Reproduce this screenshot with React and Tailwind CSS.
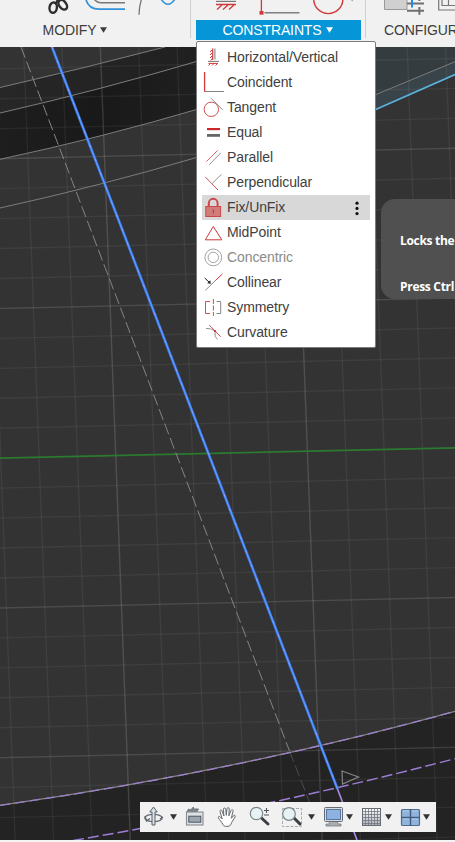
import React from "react";

const RED = "#cf3a3a";
const GRAY = "#858585";

const range = (a, b) => Array.from({ length: b - a + 1 }, (_, i) => a + i);

function Canvas() {
  return (
    <svg width="455" height="793" viewBox="0 47 455 793" className="block" fill="none">
      <defs>
        <linearGradient id="bandUpper" x1="0" y1="0" x2="1" y2="0">
          <stop offset="0" stopColor="#272727" />
          <stop offset="1" stopColor="#202020" />
        </linearGradient>
        <linearGradient id="bandLower" x1="0" y1="0" x2="1" y2="0">
          <stop offset="0" stopColor="#1e1e1e" />
          <stop offset="0.5" stopColor="#191919" />
          <stop offset="1" stopColor="#202020" />
        </linearGradient>
      </defs>
      <rect y="47" width="455" height="793" fill="#333333" />
      <path d="M0 87.5 Q85 68 165 47 H200 V60.5 Q100 90 0 113Z" fill="url(#bandUpper)" />
      <path d="M0 113 Q100 90 200 60.5 V108.5 Q100 138 0 159.3Z" fill="url(#bandLower)" />
      <path d="M370 47 H455 V74.5 L370 112Z" fill="#39444a" />
      <path d="M370 47 H455 V61.7 L370 97Z" fill="#343c3f" />
      <path d="M0 805.3 Q235 772 455 711.3 V840 H0Z" fill="#232323" />

      {range(-4, 12).map((i) => {
        const x = 100.3 + i * 38.36;
        return (
          <line key={i} x1={x} y1="47" x2={x + 30} y2="840" stroke="#fff"
            strokeOpacity={i % 5 === 0 ? 0.14 : 0.06} strokeWidth="1.4" />
        );
      })}
      {range(-13, 13).filter((i) => i !== 0).map((i) => {
        const y = 458.2 + i * 29.95;
        return (
          <line key={i} x1="0" y1={y} x2="455" y2={y - 10.4} stroke="#fff"
            strokeOpacity={i % 5 === 0 ? 0.12 : 0.055} strokeWidth="1.4" />
        );
      })}
      <line x1="0" y1="458.1" x2="455" y2="447.8" stroke="#2c7a2f" strokeWidth="1.7" />

      <g stroke="#7c7c7c" strokeWidth="1">
        <path d="M0 87.5 Q85 68 165 47" />
        <path d="M0 113 Q100 90 200 60.5" />
        <path d="M0 159.3 Q100 138 200 108.5" />
        <path d="M0 208 Q100 186 200 156.5" />
        <path d="M370 97 L455 61.7" />
      </g>
      <path d="M370 112 L455 74.5" stroke="#5bb2df" strokeWidth="1.7" />

      <path d="M21 47 L289.5 751" stroke="#858585" strokeWidth="1" strokeDasharray="11.5 4" />
      <path d="M289.5 751 L311 806" stroke="#4c4c4c" strokeWidth="1" strokeDasharray="11.5 4" />
      <path d="M0 805.3 Q235 772 455 711.3" stroke="#858585" strokeWidth="1.3" />
      <path d="M0 805.3 Q235 772 455 711.3" stroke="#9d80cf" strokeWidth="1.3" strokeDasharray="10 5" />
      <path d="M73 840.5 Q270 807 455 758.7" stroke="#9d7dd6" strokeWidth="1.5" strokeDasharray="11 4" />
      <path d="M337.5 789 L357 840" stroke="#b08bea" strokeWidth="1.6" />
      <path d="M52 47 L337.5 789" stroke="#3473dc" strokeWidth="2.8" />
      <path d="M52 47 L337.5 789" stroke="#6298ff" strokeWidth="1.3" />
      <path d="M52 47 L337.5 789" stroke="#a79be8" strokeWidth="0.9" strokeDasharray="2 13" />
      <path d="M342 771 L358.5 777 L342.5 784Z" stroke="#858585" strokeWidth="1.2" />
    </svg>
  );
}

const ICONS = {
  hv: (
    <>
      <path d="M10.7 3.5V15" stroke={RED} strokeWidth="1.2" />
      <path d="M10 5l-2 2M10 8l-2 2M10 11l-2 2M10 14l-1.5 1.2" stroke={RED} />
      <path d="M12.9 3.5V14.5M6 16.4H17" stroke="#777" />
      <path d="M6.5 18.4H16M8.5 18.5l-2 2M12 18.5l-2 2M15.5 18.5l-2 2" stroke={RED} />
    </>
  ),
  coincident: (
    <>
      <path d="M3 21.5H22" stroke={GRAY} />
      <path d="M2.6 2V21.8" stroke={RED} strokeWidth="1.3" />
    </>
  ),
  tangent: (
    <>
      <circle cx="9.3" cy="14.3" r="7.2" stroke={RED} strokeWidth=".9" />
      <path d="M8.8 3L20.7 14.8" stroke={GRAY} strokeWidth=".9" />
    </>
  ),
  equal: (
    <>
      <rect x="5" y="8" width="13" height="2.2" fill="#cc2828" />
      <rect x="5" y="14" width="13" height="2.8" fill="#666" />
    </>
  ),
  parallel: (
    <>
      <path d="M4.3 16.7L15.7 5.3" stroke="#dd5555" strokeWidth=".9" />
      <path d="M7.3 19.7L18.7 8" stroke={GRAY} strokeWidth=".9" />
    </>
  ),
  perpendicular: (
    <>
      <path d="M3.3 7L16 20" stroke={RED} strokeWidth=".9" />
      <path d="M10.3 13.3L19.5 4.3" stroke={GRAY} strokeWidth=".9" />
    </>
  ),
  fix: (
    <>
      <path d="M6.8 12V8.2a4.4 4.4 0 0 1 8.8 0V12" stroke="#cc4848" strokeWidth="2" />
      <rect x="3.8" y="11.5" width="14.8" height="10" fill="#d27b7b" stroke="#cc4848" />
      <path d="M11.3 14.5v4" stroke="#b03838" />
    </>
  ),
  midpoint: <path d="M11.3 6.5L19.8 19.8H3.3Z" stroke={RED} />,
  concentric: (
    <>
      <circle cx="11.3" cy="12.4" r="8.4" stroke="#999" strokeWidth=".9" />
      <circle cx="11.3" cy="12.4" r="5.2" stroke="#999" strokeWidth=".9" />
    </>
  ),
  collinear: (
    <>
      <path d="M3.3 20.3L14 10" stroke={GRAY} />
      <path d="M14 10L20.3 4" stroke={RED} />
      <path d="M2.7 8L8 13" stroke="#222" />
      <path d="M8.8 13.8L8.3 10.2L5.2 13.2Z" fill="#222" />
    </>
  ),
  symmetry: (
    <>
      <path d="M8 6.5H3.5V18.5H8" stroke={RED} strokeWidth=".9" />
      <path d="M11.4 4V21" stroke={RED} strokeWidth=".9" strokeDasharray="5 1.5" />
      <path d="M14.5 6.5H18.7V18.5H14.5" stroke={GRAY} strokeWidth="1" />
    </>
  ),
  curvature: (
    <>
      <path d="M4 8.5Q11 8.3 13 12Q12.3 17.5 15.5 19.5" stroke={GRAY} strokeWidth=".9" />
      <path d="M7.3 5L18.7 16.8" stroke={RED} strokeWidth=".9" />
      <circle cx="13" cy="11" r="1.1" fill="#d22" />
    </>
  ),
};

const ITEMS = [
  ["hv", "Horizontal/Vertical"],
  ["coincident", "Coincident"],
  ["tangent", "Tangent"],
  ["equal", "Equal"],
  ["parallel", "Parallel"],
  ["perpendicular", "Perpendicular"],
  ["fix", "Fix/UnFix"],
  ["midpoint", "MidPoint"],
  ["concentric", "Concentric"],
  ["collinear", "Collinear"],
  ["symmetry", "Symmetry"],
  ["curvature", "Curvature"],
];

function ConstraintMenu() {
  return (
    <ul className="absolute left-[196px] top-[41px] h-[307px] w-[180px] rounded-xs border border-[#7b7b7b] bg-white px-[5px] py-[3px]">
      {ITEMS.map(([id, label]) => (
        <li key={id} className={`flex h-[25px] items-center ${id === "fix" ? "bg-[#d8d8d8]" : ""}`}>
          <svg width="25" height="25" viewBox="0 0 25 25" fill="none" className="shrink-0">{ICONS[id]}</svg>
          <span className={`text-[14px] leading-[25px] tracking-[-0.1px] ${id === "concentric" ? "text-[#8a8a8a]" : "text-[#404040]"}`}>{label}</span>
          {id === "fix" && (
            <svg width="6" height="18" viewBox="0 0 6 18" className="ml-auto mr-[10px]" fill="#111">
              <circle cx="3" cy="4.2" r="1.6" />
              <circle cx="3" cy="9.4" r="1.6" />
              <circle cx="3" cy="14.6" r="1.6" />
            </svg>
          )}
        </li>
      ))}
    </ul>
  );
}

function Caret({ className }) {
  return (
    <svg width="7" height="6" viewBox="0 0 7 6" className={className}>
      <path d="M0 0.3H7L3.5 5.8Z" fill="currentColor" />
    </svg>
  );
}

function Ribbon() {
  return (
    <header className="flex h-[47px] overflow-hidden bg-[#f1f1f1] text-[14px] text-[#3c3c3c]">
      <section className="flex w-[191px] shrink-0 flex-col">
        <svg width="191" height="20" viewBox="0 0 191 20" fill="none" className="block">
          <g stroke="#2d2d2d" strokeWidth="2.4">
            <ellipse cx="53.2" cy="7.6" rx="3.7" ry="5.2" transform="rotate(8 53.2 7.6)" />
            <ellipse cx="62.8" cy="4.8" rx="3.5" ry="5.4" transform="rotate(-38 62.8 4.8)" />
            <path d="M56 3L60 -2M58 1L55 -3" />
          </g>
          <path d="M85.5 -2Q88 9.2 99 9.2H125" stroke="#3192d8" strokeWidth="1.7" />
          <path d="M94 -1Q97 2.8 101 2.8H125" stroke="#777" strokeWidth="1.4" />
          <path d="M139 14.8Q139 7 141.5 -1" stroke="#777" strokeWidth="1.3" />
          <path d="M161 -1Q168 9.5 175 -1" stroke="#3192d8" strokeWidth="1.5" />
          <path d="M190.5 0V20" stroke="#cfcfcf" />
        </svg>
        <div className="flex h-[18px] items-center border-r border-[#cfcfcf] pl-[42.6px] pt-[2px]">
          <span className="tracking-[-0.1px]">MODIFY</span>
          <Caret className="ml-[4px]" />
        </div>
      </section>
      <section className="flex w-[175px] shrink-0 flex-col">
        <svg width="175" height="20" viewBox="191 0 175 20" fill="none" className="block">
          <path d="M216 1.4H236" stroke="#777" strokeWidth="1.2" />
          <path d="M216 4.5H236M222.5 4.5l-5.5 5M228.5 4.5l-5.5 5M234.5 4.5l-5.5 5" stroke={RED} strokeWidth="1.3" />
          <path d="M261.4 0V12" stroke={RED} strokeWidth="1.3" />
          <rect x="259.5" y="11" width="4" height="3.7" fill={RED} />
          <path d="M264.5 12.8H299.5" stroke="#808080" strokeWidth="1.4" />
          <circle cx="328.3" cy="-1" r="14.6" stroke={RED} strokeWidth="1.4" />
          <path d="M350 -1L353 1" stroke="#999" />
          <path d="M365.5 0V20" stroke="#cfcfcf" />
        </svg>
        <div className="flex h-[18px] border-r border-[#cfcfcf]">
          <div className="ml-[5px] flex h-[20px] w-[165px] shrink-0 items-center bg-[#0696d7] pl-[26.5px] text-white">
            <span className="tracking-[-0.12px]">CONSTRAINTS</span>
            <Caret className="ml-[4px]" />
          </div>
        </div>
      </section>
      <section className="flex w-[89px] shrink-0 flex-col overflow-hidden">
        <svg width="89" height="20" viewBox="366 0 89 20" fill="none" className="block">
          <path d="M384.5 -1V9.5H407V-1Z" fill="#d0d0d0" stroke="#9a9a9a" />
          <path d="M407 3.6H424M407 10.7H424" stroke="#707070" strokeWidth="2" />
          <path d="M412 0V7.5" stroke="#1f8fe5" strokeWidth="2" />
          <path d="M419.4 7V14.7M419.4 0V1" stroke="#707070" strokeWidth="2" />
          <path d="M438.7 -1V10H456M442 -1V5.5H456M448.5 0V5.5" stroke="#777" strokeWidth="1.2" />
        </svg>
        <div className="flex h-[18px] items-center pl-[18px] pt-[2px]">
          <span className="tracking-[-0.1px]">CONFIGUR</span>
        </div>
      </section>
    </header>
  );
}

function Tooltip() {
  return (
    <aside className="absolute left-[381px] top-[199px] flex h-[100px] w-[74px] flex-col gap-[26px] overflow-hidden rounded-l-[14px] bg-[#505050] pl-[19px] pt-[32px] font-['Open_Sans','Noto_Sans',sans-serif] text-[12px] font-bold leading-[20px] tracking-[-0.3px] text-white">
      <p className="whitespace-nowrap">Locks the</p>
      <p className="whitespace-nowrap">Press Ctrl</p>
    </aside>
  );
}

function NavIcon({ x, w, children }) {
  return (
    <svg width={w} height="30" viewBox={`${x} 802 ${w} 30`} fill="none" className="shrink-0">{children}</svg>
  );
}

function NavBar() {
  return (
    <nav className="absolute left-[140px] top-[802px] flex h-[30px] w-[296px] items-center bg-[#f1f1f1] text-[#333]">
      <NavIcon x={140} w={29}>
        <ellipse cx="153.5" cy="818" rx="8.7" ry="3.6" stroke="#646b73" strokeWidth="1.3" />
        <path d="M152 812h-2.2l3.7-5 3.7 5H155v13h-3Z" fill="#dce1e5" stroke="#59616a" />
        <path d="M145 816l1.5 5 3.5-2.5M160 819l3-2" stroke="#59616a" strokeWidth="1.2" />
      </NavIcon>
      <Caret className="ml-[1px] shrink-0" />
      <NavIcon x={177} w={35}>
        <path d="M187 812l1.5-3 2 1 3-3v2h5l-2 3" fill="#7d8288" stroke="#6d7278" />
        <rect x="186.5" y="812" width="16.5" height="13" fill="#dfe2e4" stroke="#858b90" strokeWidth="1.1" />
        <rect x="188.8" y="816.2" width="12" height="6" fill="#9da5ad" stroke="#4e5863" />
      </NavIcon>
      <NavIcon x={212} w={35}>
        <path d="M223 824.8c-1-3-3.5-4.5-4.6-7-.4-1.4 1.1-1.8 2-.8l1.8 2-2.2-7.5c-.3-1.8 1.6-2 2.1-.4l1.8 4.9-.5-6.7c0-1.7 2.1-1.7 2.3 0l.6 6 .7-6.6c.3-1.6 2.2-1.4 2.2.3l-.3 6.8 2.1-5.3c.7-1.6 2.4-.7 2 .7l-1.7 7.1 2.2-2.6c1-1 2.2 0 1.5 1.3l-3.3 5.4-1 2.4c-1.6 2.1-6 2.3-7.7 0Z" fill="#fff" stroke="#646a70" strokeWidth="1" />
      </NavIcon>
      <NavIcon x={247} w={31}>
        <path d="M261.5 818l6.5 6" stroke="#3b3d40" strokeWidth="3" strokeLinecap="round" />
        <circle cx="256.5" cy="813.5" r="6.2" fill="#e6f2f4" stroke="#7c858a" strokeWidth="1.2" />
        <path d="M264 810.5h5M266.5 808v5M264 815h5" stroke="#555" strokeWidth="1.1" />
      </NavIcon>
      <NavIcon x={278} w={29}>
        <rect x="282.5" y="808.5" width="19" height="18" stroke="#a9a9a9" strokeDasharray="3 1.5" />
        <path d="M294 818l6 6" stroke="#3b3d40" strokeWidth="3" strokeLinecap="round" />
        <circle cx="289" cy="814" r="6.3" fill="#e6f2f4" stroke="#7c858a" strokeWidth="1.2" />
      </NavIcon>
      <Caret className="ml-[1px] shrink-0" />
      <NavIcon x={315} w={30}>
        <path d="M330 820h7l1 4h3v2h-15v-2h3Z" fill="#a8adb1" stroke="#777d82" strokeWidth=".8" />
        <rect x="324.5" y="807.5" width="18" height="14" rx="1" fill="#d9dde0" stroke="#666c72" />
        <rect x="326.5" y="809.5" width="14" height="10" fill="#8eb2dd" stroke="#5578a3" />
      </NavIcon>
      <Caret className="ml-[1px] shrink-0" />
      <NavIcon x={353} w={31}>
        <defs>
          <linearGradient id="gridFill" x1="0" y1="0" x2="0" y2="1">
            <stop offset="0" stopColor="#fff" />
            <stop offset="1" stopColor="#a9afb9" />
          </linearGradient>
        </defs>
        <rect x="362.5" y="808.5" width="18" height="17" fill="url(#gridFill)" stroke="#656970" />
        <path d="M365.5 808v18M368.5 808v18M371.5 808v18M374.5 808v18M377.5 808v18M362 811.5h19M362 814.5h19M362 817.5h19M362 820.5h19M362 823.5h19" stroke="#71767e" strokeWidth=".8" />
      </NavIcon>
      <Caret className="ml-[1px] shrink-0" />
      <NavIcon x={392} w={30}>
        <rect x="401.5" y="809.5" width="18" height="16" rx="1" fill="#8fb3dc" stroke="#526c8d" strokeWidth="1.2" />
        <path d="M410.5 809v17M401 817.5h19" stroke="#415d80" strokeWidth="1.4" />
        <path d="M403 811h6M412 811h6M403 819h6M412 819h6" stroke="#bbd3ed" strokeWidth=".8" />
      </NavIcon>
      <Caret className="ml-[1px] shrink-0" />
    </nav>
  );
}

export default function App() {
  return (
    <div className="relative h-[842px] w-[455px] overflow-hidden bg-[#f4f4f4] font-['Liberation_Sans',Arial,sans-serif]">
      <Ribbon />
      <Canvas />
      <ConstraintMenu />
      <Tooltip />
      <NavBar />
    </div>
  );
}
